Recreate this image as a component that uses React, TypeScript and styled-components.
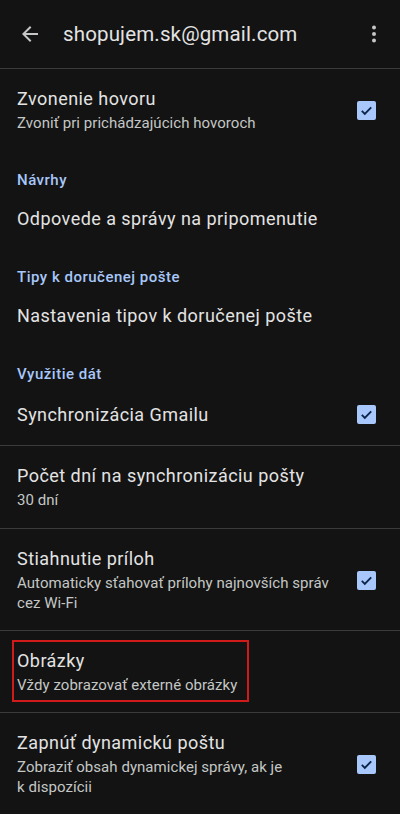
import React from "react";
import styled, { createGlobalStyle } from "styled-components";

const Global = createGlobalStyle`
  html, body { margin: 0; padding: 0; background: #131313; }
  body { font-family: Roboto, "Noto Sans", sans-serif; -webkit-font-smoothing: antialiased; }
`;

const Page = styled.div`
  width: 400px;
  min-height: 814px;
  background: #131313;
  color: #e3e3e3;
  overflow: hidden;
`;

const TopBar = styled.header`
  height: 68px;
  display: flex;
  align-items: center;
  border-bottom: 1px solid #3b3b3b;
`;

const IconButton = styled.button<{ $w: number }>`
  width: ${(p) => p.$w}px;
  height: 48px;
  display: flex;
  align-items: center;
  justify-content: center;
  background: none;
  border: none;
  padding: 0;
  color: #c4c7c5;
`;

const Title = styled.h1`
  flex: 1;
  margin: 0 0 0 3px;
  font-family: Roboto, sans-serif;
  font-size: 20.5px;
  font-weight: 400;
  color: #e3e3e3;
  letter-spacing: 0.15px;
`;

const SectionHeader = styled.div<{ $top: number }>`
  padding: ${(p) => p.$top}px 17px 0;
  font-size: 15px;
  line-height: 20px;
  font-weight: 500;
  letter-spacing: 0.5px;
  color: #a8c7fa;
`;

const Row = styled.div<{ $pad: number; $bottom?: number; $divider?: boolean; $min?: number }>`
  display: flex;
  align-items: center;
  padding: ${(p) => p.$pad}px 0 ${(p) => p.$bottom ?? p.$pad}px 17px;
  min-height: ${(p) => p.$min ?? 0}px;
  box-sizing: border-box;
  border-bottom: ${(p) => (p.$divider ? "1px solid #3b3b3b" : "none")};
`;

const TextBlock = styled.div<{ $marked?: boolean }>`
  flex: 1;
  min-width: 0;
  position: relative;
  ${(p) =>
    p.$marked
      ? `&::after {
    content: "";
    position: absolute;
    left: -5px;
    top: -9px;
    width: 237px;
    height: 62px;
    box-sizing: border-box;
    border: 2px solid #d11a1a;
  }`
      : ""}
`;

const RowTitle = styled.div`
  font-size: 18px;
  line-height: 24px;
  letter-spacing: 0.45px;
  color: #e3e3e3;
`;

const RowSub = styled.div`
  margin-top: 2px;
  font-size: 15px;
  line-height: 20px;
  letter-spacing: 0.05px;
  color: #c4c7c5;
`;

const CheckCell = styled.div`
  width: 60px;
  flex-shrink: 0;
  display: flex;
  padding-left: 17px;
  box-sizing: border-box;
`;

const Box = styled.div`
  width: 19px;
  height: 19px;
  border-radius: 2px;
  background: #a8c7fa;
  display: flex;
  align-items: center;
  justify-content: center;
`;

const Check = () => (
  <CheckCell>
    <Box>
      <svg width="15" height="15" viewBox="0 0 24 24">
        <path d="M4.5 12.5l4.8 4.8L19.5 7" fill="none" stroke="#0b2449" strokeWidth="3" />
      </svg>
    </Box>
  </CheckCell>
);

export default function App() {
  return (
    <Page>
      <Global />
      <TopBar>
        <IconButton $w={60}>
          <svg width="24" height="24" viewBox="0 0 24 24">
            <path d="M20 11H7.83l5.59-5.59L12 4l-8 8 8 8 1.41-1.41L7.83 13H20v-2z" fill="#c4c7c5" />
          </svg>
        </IconButton>
        <Title>shopujem.sk@gmail.com</Title>
        <IconButton $w={52}>
          <svg width="24" height="24" viewBox="0 0 24 24">
            <circle cx="12" cy="5.5" r="2" fill="#c4c7c5" />
            <circle cx="12" cy="12" r="2" fill="#c4c7c5" />
            <circle cx="12" cy="18.5" r="2" fill="#c4c7c5" />
          </svg>
        </IconButton>
      </TopBar>

      <Row $pad={18}>
        <TextBlock>
          <RowTitle>Zvonenie hovoru</RowTitle>
          <RowSub>Zvoniť pri prichádzajúcich hovoroch</RowSub>
        </TextBlock>
        <Check />
      </Row>

      <SectionHeader $top={19}>Návrhy</SectionHeader>
      <Row $pad={17}>
        <TextBlock>
          <RowTitle>Odpovede a správy na pripomenutie</RowTitle>
        </TextBlock>
      </Row>

      <SectionHeader $top={19}>Tipy k doručenej pošte</SectionHeader>
      <Row $pad={17}>
        <TextBlock>
          <RowTitle>Nastavenia tipov k doručenej pošte</RowTitle>
        </TextBlock>
      </Row>

      <SectionHeader $top={19}>Využitie dát</SectionHeader>
      <Row $pad={0} $min={62} $divider>
        <TextBlock>
          <RowTitle>Synchronizácia Gmailu</RowTitle>
        </TextBlock>
        <Check />
      </Row>

      <Row $pad={18} $divider>
        <TextBlock>
          <RowTitle>Počet dní na synchronizáciu pošty</RowTitle>
          <RowSub>30 dní</RowSub>
        </TextBlock>
      </Row>

      <Row $pad={18} $bottom={17} $divider>
        <TextBlock>
          <RowTitle>Stiahnutie príloh</RowTitle>
          <RowSub>Automaticky sťahovať prílohy najnovších správ cez Wi-Fi</RowSub>
        </TextBlock>
        <Check />
      </Row>

      <Row $pad={18} $bottom={17} $divider>
        <TextBlock $marked>
          <RowTitle>Obrázky</RowTitle>
          <RowSub>Vždy zobrazovať externé obrázky</RowSub>
        </TextBlock>
      </Row>

      <Row $pad={18}>
        <TextBlock>
          <RowTitle>Zapnúť dynamickú poštu</RowTitle>
          <RowSub>Zobraziť obsah dynamickej správy, ak je k{"\u00a0"}dispozícii</RowSub>
        </TextBlock>
        <Check />
      </Row>
    </Page>
  );
}
